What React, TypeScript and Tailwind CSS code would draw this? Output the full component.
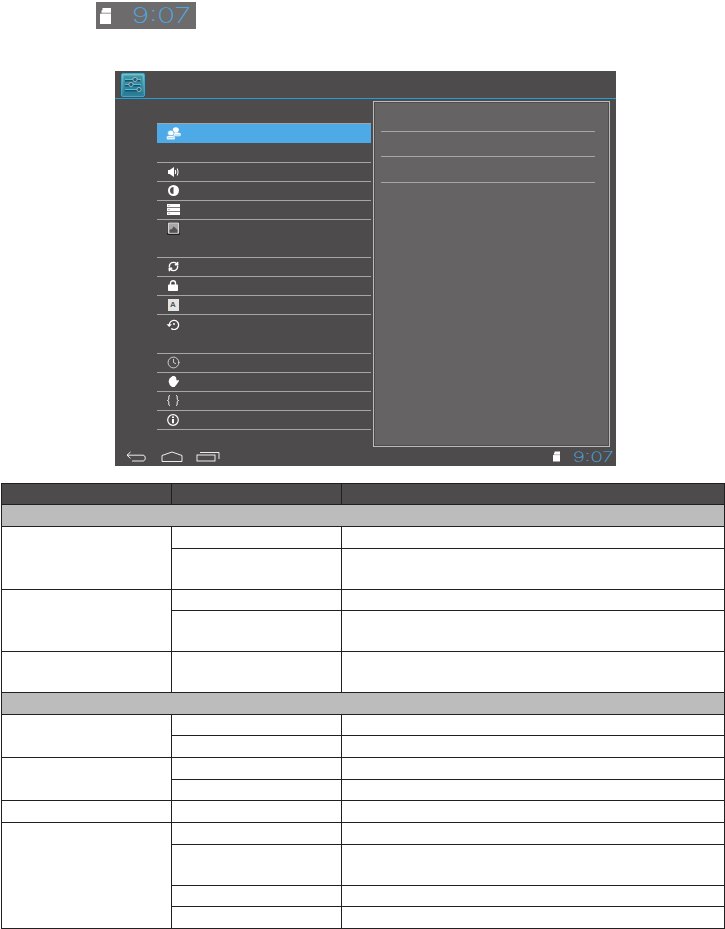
import { Clock, RefreshCw } from 'lucide-react'
import type { ReactNode } from 'react'

function SdCard({ className }: { className: string }) {
  return (
    <svg className={className} viewBox="0 0 11 16" fill="#ffffff">
      <path d="M2.5 0H11v16H0V5.5h1.5V2.5L2.5 2z" />
      <path d="M0 5.2h11" stroke="#77787a" strokeWidth="0.8" />
    </svg>
  )
}

function SettingsLogo() {
  return (
    <svg className="h-[24px] w-[24px]" viewBox="0 0 24 24">
      <defs>
        <linearGradient id="logo-bg" x1="0" y1="0" x2="0" y2="1">
          <stop offset="0" stopColor="#76c6c8" />
          <stop offset="1" stopColor="#25809c" />
        </linearGradient>
      </defs>
      <rect x="0.5" y="0.5" width="23" height="23" rx="1.5" fill="url(#logo-bg)" stroke="#27aee0" />
      <rect x="2.5" y="2.5" width="19" height="19" fill="#2a6f86" opacity="0.55" />
      <path d="M4 7.5h15M4 12.5h15M4 17.5h15" stroke="#18506e" strokeWidth="2" />
      <path d="M4 6.5h16M4 11.5h16M4 16.5h16" stroke="#45c1ea" strokeWidth="1.1" />
      <circle cx="14" cy="6.5" r="2.1" fill="#33596b" stroke="#a9d9e2" strokeWidth="0.7" />
      <circle cx="10" cy="11.5" r="2.1" fill="#33596b" stroke="#a9d9e2" strokeWidth="0.7" />
      <circle cx="18" cy="16.5" r="2.1" fill="#33596b" stroke="#a9d9e2" strokeWidth="0.7" />
    </svg>
  )
}

function AccountsIcon() {
  return (
    <svg className="h-[13px] w-[15px]" viewBox="0 0 15 13">
      <ellipse cx="9.8" cy="2.8" rx="3" ry="2.6" fill="#ffffff" />
      <path d="M6 6.2c1.5-1 6.5-1 8.5 0 .5 1.2.2 2.4-.5 3H6.5z" fill="#ffffff" />
      <path d="M9 8h5" stroke="#4daae6" strokeWidth="0.6" />
      <ellipse cx="4.8" cy="6" rx="3.2" ry="2.8" fill="#ffffff" stroke="#4daae6" strokeWidth="0.7" />
      <path d="M0.6 9.2c1.5-1 6.5-1 8.4 0 .4 1.4.2 2.8-.6 3.6H1.2C.4 12 .2 10.6.6 9.2z" fill="#ffffff" stroke="#4daae6" strokeWidth="0.6" />
      <path d="M1.5 10.8h6.5" stroke="#4daae6" strokeWidth="0.6" />
    </svg>
  )
}

function SpeakerIcon() {
  return (
    <svg className="h-[10px] w-[11px]" viewBox="0 0 11 10" fill="#ffffff">
      <path d="M0 3h1.6L6 0v10L1.6 7H0z" />
      <path d="M7.3 3q.9 2 0 4" stroke="#ffffff" fill="none" strokeWidth="1.1" />
      <path d="M9.3 1.5q1.6 3.5 0 7" stroke="#ffffff" fill="none" strokeWidth="1" />
    </svg>
  )
}

function BrightnessIcon() {
  return (
    <svg className="h-[11px] w-[11px]" viewBox="0 0 11 11">
      <circle cx="5.5" cy="5.5" r="5.5" fill="#ffffff" />
      <path d="M5.5 2a3.5 3.5 0 0 0 0 7z" fill="#4e4b4c" />
    </svg>
  )
}

function StorageIcon() {
  return (
    <svg className="h-[11px] w-[13px]" viewBox="0 0 13 11" fill="#ffffff">
      <rect width="13" height="3.2" />
      <rect y="3.9" width="13" height="3.2" />
      <rect y="7.8" width="13" height="3.2" />
      <path d="M1 1.6h2M1 5.5h2M1 9.4h2" stroke="#8a8889" strokeWidth="0.6" />
    </svg>
  )
}

function AppsIcon() {
  return (
    <svg className="h-[13px] w-[13px]" viewBox="0 0 13 13">
      <rect width="13" height="13" rx="1.5" fill="#1f1d1e" />
      <rect x="0.8" y="0.4" width="11.4" height="11.4" rx="1.2" fill="#e2e2e2" />
      <rect x="1.8" y="1.4" width="9.4" height="9.4" fill="#a8a6a6" />
      <path d="M2.5 10.8V7.8L5 7l1.5-2.5L8.5 6l2 2v2.8z" fill="#555354" />
    </svg>
  )
}

function LockIcon() {
  return (
    <svg className="h-[11px] w-[10px]" viewBox="0 0 10 11" fill="#ffffff">
      <rect y="4.5" width="10" height="6.5" rx="0.8" />
      <path d="M2.5 5V3.2a2.5 2.5 0 0 1 5 0V5" fill="none" stroke="#ffffff" strokeWidth="1.4" />
    </svg>
  )
}

function BackupIcon() {
  return (
    <svg className="h-[12px] w-[14px]" viewBox="0 0 14 12" fill="none" stroke="#ffffff">
      <path d="M3.4 7.5A4.6 4.6 0 1 1 5.2 10.6" strokeWidth="1.3" />
      <path d="M.5 6.2h5.4L3.2 9z" fill="#ffffff" stroke="none" />
      <circle cx="8" cy="6" r="1" fill="#ffffff" stroke="none" />
    </svg>
  )
}

function HandIcon() {
  return (
    <svg className="h-[11px] w-[11px]" viewBox="0 0 11 11" fill="#ffffff">
      <path d="M1.5 2.5 3 1.2 4.5 0h2L8 1.2l.6 3.3L10.5 4 11 5 8.6 8.5 6.5 11H4L1.8 9 .6 5.5z" />
    </svg>
  )
}

function BracesIcon() {
  return (
    <svg className="h-[11px] w-[12px]" viewBox="0 0 12 11" fill="none" stroke="#ffffff" strokeWidth="1">
      <path d="M3 .5c-1.4 0-1.2 1.2-1.2 2.4S1.6 5.5.5 5.5c1.1 0 1.3 1.4 1.3 2.6s-.2 2.4 1.2 2.4" />
      <path d="M9 .5c1.4 0 1.2 1.2 1.2 2.4s.2 2.6 1.3 2.6c-1.1 0-1.3 1.4-1.3 2.6s.2 2.4-1.2 2.4" />
    </svg>
  )
}

function InfoIcon() {
  return (
    <svg className="h-[12px] w-[12px]" viewBox="0 0 12 12" fill="none" stroke="#ffffff">
      <circle cx="6" cy="6" r="5.3" strokeWidth="1.2" />
      <path d="M6 5v4.2" strokeWidth="2" />
      <path d="M6 2.5v1.5" strokeWidth="2" />
    </svg>
  )
}

const menuRows: { height: string; icon?: ReactNode }[] = [
  { height: 'h-[19px]', icon: <SpeakerIcon /> },
  { height: 'h-[19px]', icon: <BrightnessIcon /> },
  { height: 'h-[19px]', icon: <StorageIcon /> },
  { height: 'h-[38px]', icon: <AppsIcon /> },
  { height: 'h-[19px]', icon: <RefreshCw className="h-[11px] w-[11px] text-white" strokeWidth={3.2} /> },
  { height: 'h-[19px]', icon: <LockIcon /> },
  {
    height: 'h-[19px]',
    icon: (
      <span className="flex h-[12px] w-[11px] items-center justify-center bg-[#e4e4e4] font-['Liberation_Sans',sans-serif] text-[8px] leading-none font-bold text-[#555]">
        A
      </span>
    ),
  },
  { height: 'h-[39px]', icon: <BackupIcon /> },
  { height: 'h-[19px]', icon: <Clock className="h-[13px] w-[13px] text-white" strokeWidth={1.3} /> },
  { height: 'h-[19px]', icon: <HandIcon /> },
  { height: 'h-[19px]', icon: <BracesIcon /> },
  { height: 'h-[19px]', icon: <InfoIcon /> },
]

function MenuList() {
  return (
    <div className="ml-[42px] w-[214px] pt-[24px]">
      <div className="flex h-[20px] items-center border-t border-[#a7a5a5] bg-[#4daae6]">
        <span className="flex w-[32px] justify-center">
          <AccountsIcon />
        </span>
      </div>
      <div className="h-[20px] border-b border-[#a7a5a5]" />
      {menuRows.map((row, i) => (
        <div key={i} className={`${row.height} border-b border-[#a7a5a5]`}>
          <span className="flex h-[17px] w-[32px] items-center justify-center">{row.icon}</span>
        </div>
      ))}
    </div>
  )
}

function DetailPanel() {
  return (
    <div className="mt-[2px] ml-[2px] h-[346px] w-[237px] border border-[#bdbcbc] bg-[#656364] px-[7px] pt-[29px] shadow-[inset_0_0_0_1px_#4e4b4c]">
      <div className="w-[214px] border-t border-[#a7a5a5]" />
      <div className="mt-[24px] w-[214px] border-t border-[#a7a5a5]" />
      <div className="mt-[25px] w-[214px] border-t border-[#a7a5a5]" />
    </div>
  )
}

function NavBar() {
  return (
    <div className="flex h-[19px] items-center pr-[4px] pl-[11px]">
      <svg className="h-[11px] w-[21px]" viewBox="0 0 21 11" fill="none" stroke="#ffffff" strokeWidth="0.9">
        <path d="M4.5 1 1 4.2l3.5 3.2M1 4.2h16c3 0 3 5.8 0 5.8H6" />
      </svg>
      <svg className="ml-[14px] h-[11px] w-[22px]" viewBox="0 0 22 11" fill="none" stroke="#ffffff" strokeWidth="0.9">
        <path d="M1 4.5 11 1l10 3.5v6H1z" />
      </svg>
      <svg className="ml-[13px] h-[11px] w-[24px]" viewBox="0 0 24 11" fill="none" stroke="#ffffff" strokeWidth="0.9">
        <rect x="1" y="4" width="18" height="6" />
        <path d="M4 1.5h19V8" />
      </svg>
      <SdCard className="ml-auto h-[11px] w-[7px]" />
      <span className="ml-[13px] w-[39px] origin-left scale-x-[1.45] font-['Inter',sans-serif] text-[14px] leading-none font-extralight text-[#4da8e0]">
        9:07
      </span>
    </div>
  )
}

// line-to-line heights of the table rows
const tableRows: { height: string; cells: number[]; section?: boolean; header?: boolean }[] = [
  { height: 'h-[21px]', cells: [1, 1, 1], header: true },
  { height: 'h-[22px]', cells: [3], section: true },
  { height: 'h-[22px]', cells: [2, 1, 1] },
  { height: 'h-[41px]', cells: [0, 1, 1] },
  { height: 'h-[21px]', cells: [2, 1, 1] },
  { height: 'h-[41px]', cells: [0, 1, 1] },
  { height: 'h-[41px]', cells: [1, 1, 1] },
  { height: 'h-[22px]', cells: [3], section: true },
  { height: 'h-[21px]', cells: [2, 1, 1] },
  { height: 'h-[22px]', cells: [0, 1, 1] },
  { height: 'h-[22px]', cells: [2, 1, 1] },
  { height: 'h-[21px]', cells: [0, 1, 1] },
  { height: 'h-[22px]', cells: [1, 1, 1] },
  { height: 'h-[22px]', cells: [4, 1, 1] },
  { height: 'h-[41px]', cells: [0, 1, 1] },
  { height: 'h-[21px]', cells: [0, 1, 1] },
  { height: 'h-[22px]', cells: [0, 1, 1] },
]

function SpecTable() {
  return (
    <table className="mt-[17px] ml-[1px] w-[724px] table-fixed border-collapse border border-[#231f20]">
      <colgroup>
        <col className="w-[170px]" />
        <col className="w-[170px]" />
        <col />
      </colgroup>
      <tbody>
        {tableRows.map((row, i) => (
          <tr
            key={i}
            className={`${row.height} ${row.header ? 'bg-[#4e4b4c]' : ''} ${row.section ? 'bg-[#bcbcbc]' : ''}`}
          >
            {row.section ? (
              <td colSpan={3} className="border border-[#231f20]" />
            ) : (
              row.cells.map((span, j) =>
                span === 0 ? null : <td key={j} rowSpan={j === 0 ? span : 1} className="border border-[#231f20]" />,
              )
            )}
          </tr>
        ))}
      </tbody>
    </table>
  )
}

export default function App() {
  return (
    <div className="h-[929px] w-[725px] overflow-hidden bg-white pt-[2px]">
      <div className="ml-[96px] flex h-[27px] w-[100px] items-center bg-[#6d6b6c] pl-[4px]">
        <SdCard className="h-[16px] w-[11px]" />
        <span className="ml-[21px] origin-left scale-x-[1.4] font-['Inter',sans-serif] text-[21px] leading-none font-extralight text-[#4da8e0]">
          9:07
        </span>
      </div>

      <div className="mt-[42px] ml-[115px] h-[395px] w-[501px] bg-[#4e4b4c]">
        <div className="flex h-[28px] items-center border-b border-[#1f9fd6] pl-[6px]">
          <SettingsLogo />
        </div>
        <div className="flex h-[348px]">
          <MenuList />
          <DetailPanel />
        </div>
        <NavBar />
      </div>

      <SpecTable />
    </div>
  )
}
